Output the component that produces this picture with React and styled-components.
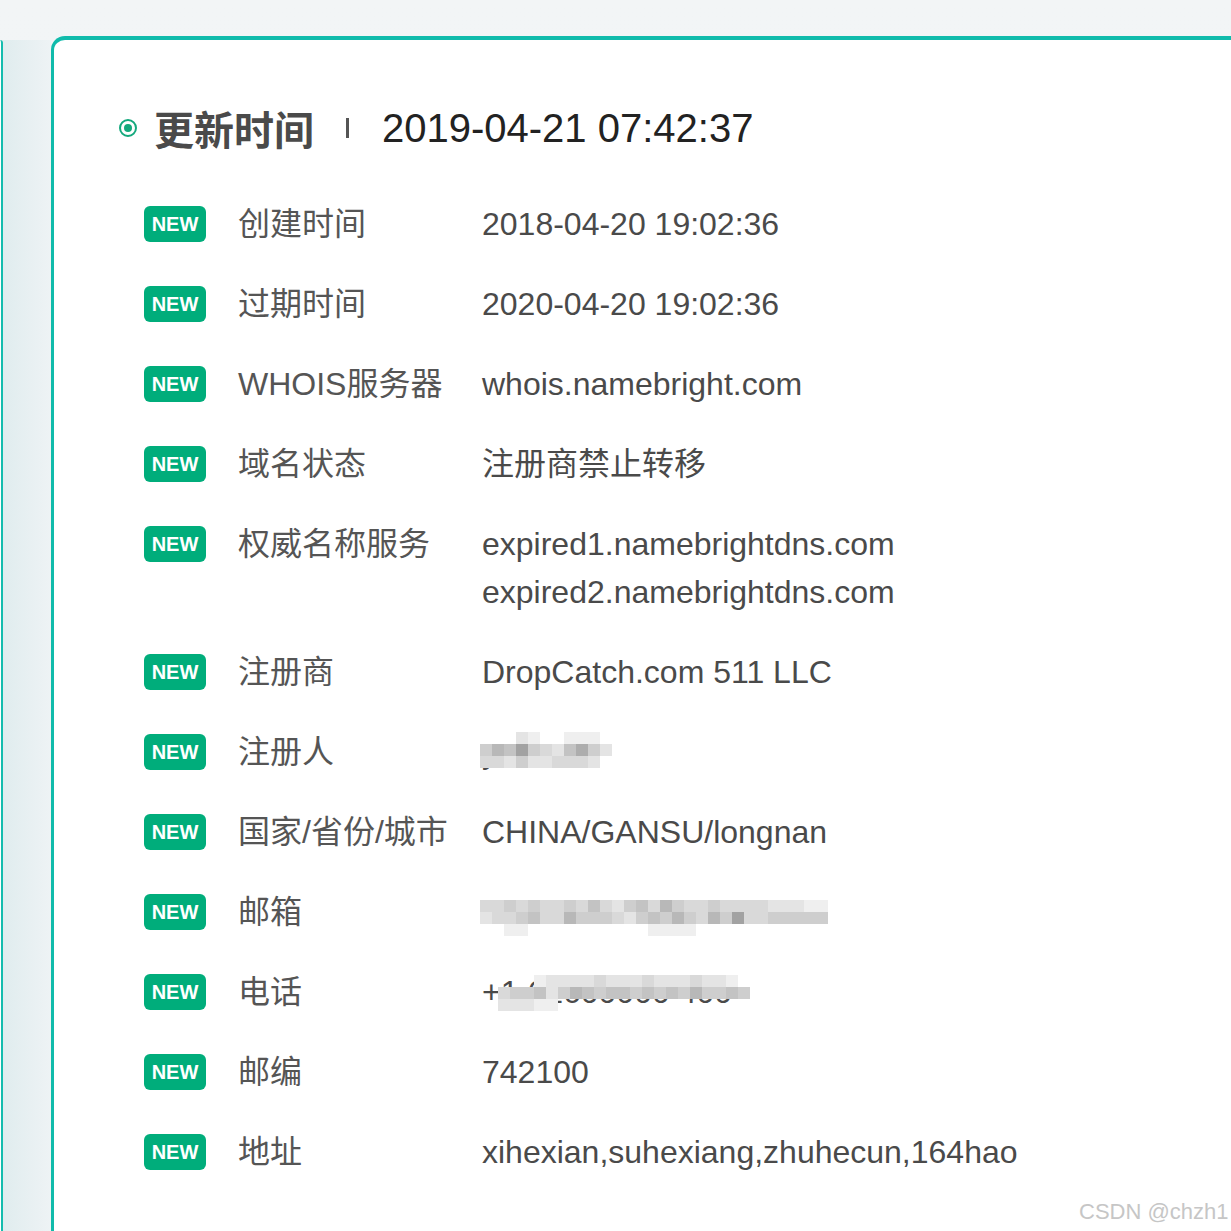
import React from 'react';
import styled, { createGlobalStyle } from "styled-components";

const GlobalStyle = createGlobalStyle`
  html, body {
    margin: 0;
    padding: 0;
    background: #f0f3f5;
  }
  * { box-sizing: border-box; }
`;

const Page = styled.div`
  position: relative;
  width: 1231px;
  height: 1231px;
  overflow: hidden;
  display: flex;
  background: linear-gradient(180deg, #f2f5f6 0%, #eef2f4 100%);
  font-family: "Liberation Sans", "Noto Sans CJK SC", sans-serif;
`;

const SideShade = styled.div`
  width: 51px;
  flex-shrink: 0;
  display: flex;
  background: linear-gradient(90deg, #dfecee 0%, #e8f0f2 60%, #eef3f5 100%);
  margin-top: 40px;
`;

const PrevCard = styled.div`
  width: 3px;
  border-right: 2px solid #15bcae;
  border-top-right-radius: 6px;
  background: #ffffff;
`;

const Card = styled.section`
  flex: 1;
  min-width: 1240px;
  margin-top: 36px;
  background: #ffffff;
  border-top: 4px solid #10bbab;
  border-left: 3px solid #10bbab;
  border-top-left-radius: 14px;
  padding: 60px 0 0 65px;
`;

const Header = styled.header`
  display: flex;
  align-items: center;
  height: 56px;
`;

const Radio = styled.span`
  width: 18px;
  height: 18px;
  border: 2px solid #14a97d;
  border-radius: 50%;
  display: flex;
  align-items: center;
  justify-content: center;
  margin-right: 17px;
  &::after {
    content: "";
    width: 8px;
    height: 8px;
    border-radius: 50%;
    background: #14a97d;
  }
`;

const Title = styled.h1`
  margin: 0;
  font-size: 40px;
  font-weight: 700;
  color: #4a4a4a;
`;

const Divider = styled.span`
  width: 3px;
  height: 20px;
  background: #555;
  margin: 0 33px 0 32px;
`;

const Stamp = styled.span`
  font-size: 40px;
  color: #222;
`;

const List = styled.div`
  margin-top: 44px;
  padding-left: 25px;
  display: flex;
  flex-direction: column;
  gap: 32px;
`;

const Row = styled.div`
  display: flex;
  align-items: flex-start;
`;

const Badge = styled.span`
  width: 62px;
  height: 36px;
  margin-top: 6px;
  margin-right: 32px;
  border-radius: 6px;
  background: #00ad7b;
  color: #fff;
  font-weight: 700;
  font-size: 20px;
  display: flex;
  align-items: center;
  justify-content: center;
`;

const Label = styled.span`
  width: 244px;
  font-size: 32px;
  line-height: 48px;
  color: #555;
  white-space: nowrap;
`;

const Value = styled.div`
  position: relative;
  font-size: 32px;
  line-height: 48px;
  color: #4a4a4a;
  display: flex;
  flex-direction: column;
  white-space: nowrap;
`;

const MosaicBox = styled.svg`
  position: absolute;
  display: block;
`;

const Watermark = styled.span`
  position: absolute;
  left: 1079px;
  top: 1199px;
  font-size: 22px;
  color: #c6c6c6;
  white-space: nowrap;
`;

const Mosaic = ({ rows, left, top, cell = 12 }) => {
  const cols = rows[0].length;
  return (
    <MosaicBox
      width={cols * cell}
      height={rows.length * cell}
      style={{ left, top }}
    >
      {rows.map((r, y) =>
        r.split('').map((c, x) => {
          const d = parseInt(c, 10);
          if (!d) return null;
          const g = 250 - d * 11;
          return (
            <rect
              key={`${x}-${y}`}
              x={x * cell}
              y={y * cell}
              width={cell}
              height={cell}
              fill={`rgb(${g},${g},${g})`}
            />
          );
        })
      )}
    </MosaicBox>
  );
};

const rows = [
  { label: '创建时间', value: ['2018-04-20 19:02:36'] },
  { label: '过期时间', value: ['2020-04-20 19:02:36'] },
  { label: 'WHOIS服务器', value: ['whois.namebright.com'] },
  { label: '域名状态', value: ['注册商禁止转移'] },
  { label: '权威名称服务', value: ['expired1.namebrightdns.com', 'expired2.namebrightdns.com'] },
  { label: '注册商', value: ['DropCatch.com 511 LLC'] },
  {
    label: '注册人',
    value: ['y'],
    mosaic: { left: -2, top: 4, rows: ['00021001110', '46584325742', '33242233320'] },
  },
  { label: '国家/省份/城市', value: ['CHINA/GANSU/longnan'] },
  {
    label: '邮箱',
    value: [''],
    mosaic: {
      left: -2,
      top: 12,
      rows: [
        '33434334353245364334333322211',
        '23345336444324546436483344444',
        '00110000000000111100000000000',
      ],
    },
  },
  {
    label: '电话',
    value: ['+1 61600000 400'],
    mosaic: {
      left: 16,
      top: 7,
      rows: ['0001222232223222322100', '3445246545545454644540', '2221100000000000000000'],
    },
  },
  { label: '邮编', value: ['742100'] },
  { label: '地址', value: ['xihexian,suhexiang,zhuhecun,164hao'] },
];

const App = () => (
  <Page>
    <GlobalStyle />
    <SideShade>
      <PrevCard />
    </SideShade>
    <Card>
      <Header>
        <Radio />
        <Title>更新时间</Title>
        <Divider />
        <Stamp>2019-04-21 07:42:37</Stamp>
      </Header>
      <List>
        {rows.map((r) => (
          <Row key={r.label}>
            <Badge>NEW</Badge>
            <Label>{r.label}</Label>
            <Value>
              {r.value.map((v, i) => (
                <span key={i}>{v || '\u00a0'}</span>
              ))}
              {r.mosaic && <Mosaic {...r.mosaic} />}
            </Value>
          </Row>
        ))}
      </List>
    </Card>
    <Watermark>CSDN @chzh1</Watermark>
  </Page>
);

export default App;
